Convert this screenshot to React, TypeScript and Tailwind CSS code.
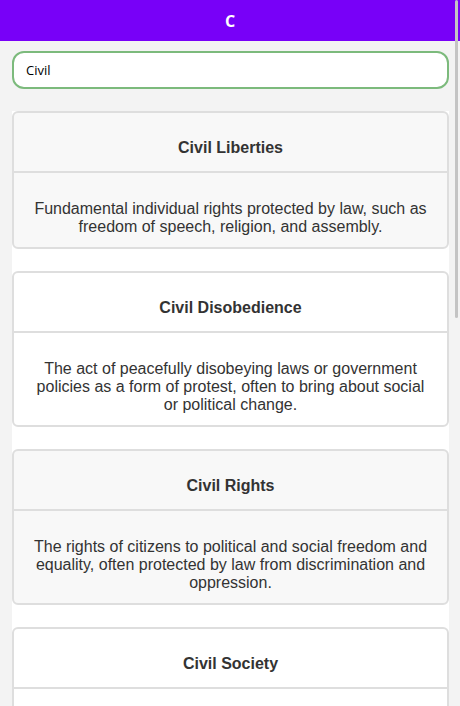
const terms = [
  {
    title: "Civil Liberties",
    text: "Fundamental individual rights protected by law, such as freedom of speech, religion, and assembly.",
  },
  {
    title: "Civil Disobedience",
    text: "The act of peacefully disobeying laws or government policies as a form of protest, often to bring about social or political change.",
  },
  {
    title: "Civil Rights",
    text: "The rights of citizens to political and social freedom and equality, often protected by law from discrimination and oppression.",
  },
  {
    title: "Civil Society",
    text: "The aggregate of non-governmental organizations and institutions that manifest the interests and will of citizens.",
  },
  {
    title: "Civil Service",
    text: "The permanent professional branches of a government's administration, excluding military and judicial branches and elected politicians.",
  },
  {
    title: "Civil Law",
    text: "A legal system based on written codes that governs disputes between individuals or organizations, rather than criminal matters.",
  },
  {
    title: "Civil War",
    text: "A war between organized groups within the same state or country, often fought over control of the government or territory.",
  },
  {
    title: "Civil Union",
    text: "A legally recognized arrangement similar to marriage, granting couples certain rights and responsibilities under the law.",
  },
];

export default function App() {
  return (
    <div className="relative h-[706px] overflow-y-scroll bg-[#f3f3f3] [scrollbar-width:none]">
      {/* thin overlay scrollbar as in the capture */}
      <div className="fixed top-0 right-[2px] z-10 h-[318px] w-[3px] rounded-full bg-[#c4c4c4]" />

      {/* top bar with the current letter */}
      <header className="flex h-[41px] items-center justify-center bg-[#7800f8]">
        <h1 className="font-['Open_Sans',sans-serif] text-base font-bold text-white">C</h1>
      </header>

      <div className="pl-3 pr-[11px]">
        <input
          defaultValue="Civil"
          className="mt-[10px] box-border h-[38px] w-full rounded-xl border-2 border-[#7cba7c] bg-white px-3 font-['Open_Sans',sans-serif] text-[13px] text-black outline-none"
        />

        <ul className="mt-[22px] bg-white pb-[71px]">
          {terms.map((t, i) => (
            <li
              key={t.title}
              className={`mb-[22px] overflow-hidden rounded-md border-2 border-[#dedede] font-['Liberation_Sans',Arial,sans-serif] text-[#333] ${
                i % 2 === 0 ? "bg-[#f8f8f8]" : "bg-white"
              }`}
            >
              <h2 className="border-b-2 border-[#dedede] pt-[26px] pb-[14px] text-center text-base leading-[18px] font-bold">
                {t.title}
              </h2>
              <p className="px-[14px] pt-[27px] pb-[11px] text-center text-base leading-[18px]">
                {t.text}
              </p>
            </li>
          ))}
        </ul>
      </div>
    </div>
  );
}
